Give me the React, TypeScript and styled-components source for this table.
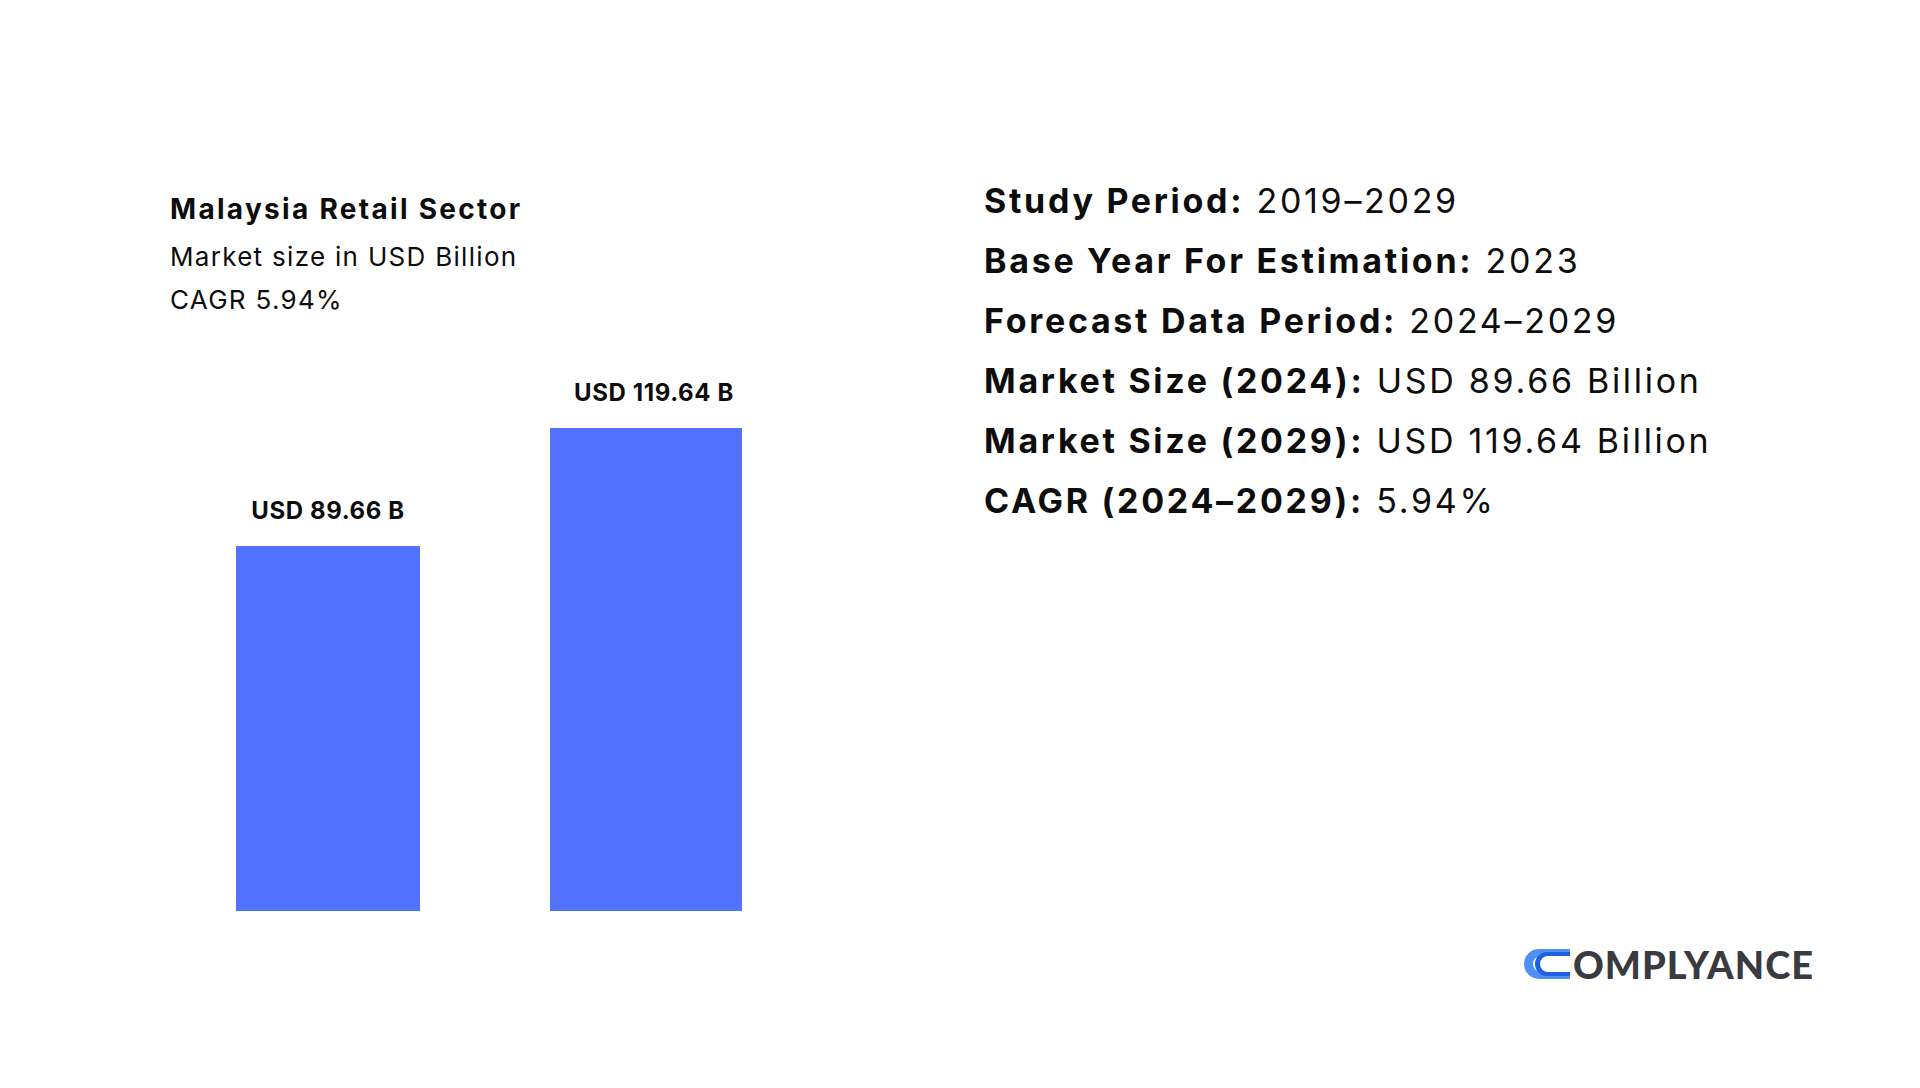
import React from 'react';
import styled, { createGlobalStyle } from 'styled-components';

const GlobalStyle = createGlobalStyle`
  html, body {
    margin: 0;
    padding: 0;
    background: #ffffff;
  }
  body {
    font-family: Inter, 'Liberation Sans', sans-serif;
    color: #0d0d0d;
  }
`;

const Page = styled.div`
  width: 1920px;
  height: 1088px;
  box-sizing: border-box;
  padding-top: 171px;
  display: flex;
  flex-direction: column;
  overflow: hidden;
`;

const Content = styled.div`
  display: flex;
  align-items: flex-start;
`;

const ChartPanel = styled.section`
  width: 814px;
  box-sizing: border-box;
  margin-left: 170px;
  padding-top: 21px;
  display: flex;
  flex-direction: column;
`;

const ChartTitle = styled.h1`
  margin: 0 0 9px;
  font-size: 28px;
  line-height: 34px;
  font-weight: 700;
  letter-spacing: 2.3px;
`;

const ChartNote = styled.div`
  font-size: 26px;
  line-height: 43px;
  font-weight: 400;
  letter-spacing: 1.3px;
`;

const Chart = styled.div`
  height: 590px;
  padding-left: 66px;
  display: flex;
  align-items: flex-end;
  gap: 130px;
`;

const BarColumn = styled.div<{ $width: number }>`
  width: ${(props) => props.$width}px;
  display: flex;
  flex-direction: column;
  align-items: center;
  gap: 21px;
`;

const BarLabel = styled.div<{ $shift: number }>`
  font-size: 24px;
  line-height: 28px;
  font-weight: 700;
  letter-spacing: 0.6px;
  white-space: nowrap;
  transform: translateX(${(props) => props.$shift}px);
`;

const Bar = styled.div<{ $height: number }>`
  width: 100%;
  height: ${(props) => props.$height}px;
  background: #5271ff;
`;

const Facts = styled.ul`
  list-style: none;
  margin: 0;
  padding: 0;
`;

const Fact = styled.li`
  font-size: 34px;
  line-height: 60px;
  letter-spacing: 2.7px;
  white-space: nowrap;
  strong {
    font-weight: 700;
  }
`;

const Footer = styled.footer`
  margin-top: 37px;
  padding-right: 106px;
  display: flex;
  justify-content: flex-end;
`;

const Logo = styled.div`
  display: flex;
  align-items: center;
  gap: 3px;
`;

const LogoText = styled.span`
  font-family: Lato, 'DejaVu Sans', sans-serif;
  font-weight: 900;
  font-size: 38px;
  line-height: 32px;
  letter-spacing: 1px;
  color: #3a3b40;
`;

const LogoMark = () => (
  <svg width='46' height='32' viewBox='0 0 46 32'>
    <path d='M46 1 H15 A15 15 0 0 0 15 31 H46 V24 H17 A8 8 0 0 1 17 8 H46 Z' fill='#4f8ff4' />
    <path d='M46 4 H23 A12 12 0 0 0 23 28 H46 V24 H24 A8 8 0 0 1 24 8 H46 Z' fill='#1e5fe6' />
  </svg>
);

const bars = [
  { label: 'USD 89.66 B', width: 184, height: 365, shift: 0 },
  { label: 'USD 119.64 B', width: 192, height: 483, shift: 8 },
];

const facts = [
  { name: 'Study Period:', value: '2019–2029' },
  { name: 'Base Year For Estimation:', value: '2023' },
  { name: 'Forecast Data Period:', value: '2024–2029' },
  { name: 'Market Size (2024):', value: 'USD 89.66 Billion' },
  { name: 'Market Size (2029):', value: 'USD 119.64 Billion' },
  { name: 'CAGR (2024–2029):', value: '5.94%' },
];

const App = () => {
  return (
    <>
      <GlobalStyle />
      <Page>
        <Content>
          <ChartPanel>
            <ChartTitle>Malaysia Retail Sector</ChartTitle>
            <ChartNote>Market size in USD Billion</ChartNote>
            <ChartNote>CAGR 5.94%</ChartNote>
            <Chart>
              {bars.map((bar) => (
                <BarColumn key={bar.label} $width={bar.width}>
                  <BarLabel $shift={bar.shift}>{bar.label}</BarLabel>
                  <Bar $height={bar.height} />
                </BarColumn>
              ))}
            </Chart>
          </ChartPanel>
          <Facts>
            {facts.map((fact) => (
              <Fact key={fact.name}>
                <strong>{fact.name}</strong> {fact.value}
              </Fact>
            ))}
          </Facts>
        </Content>
        <Footer>
          <Logo>
            <LogoMark />
            <LogoText>OMPLYANCE</LogoText>
          </Logo>
        </Footer>
      </Page>
    </>
  );
};

export default App;
